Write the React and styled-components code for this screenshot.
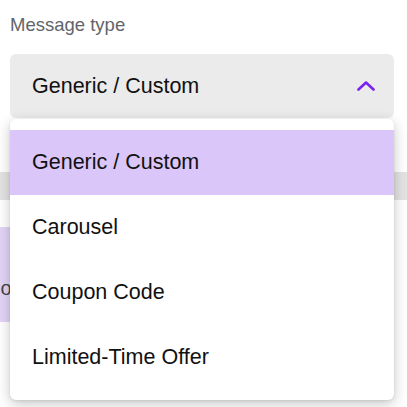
import React, { useState } from "react";
import styled, { createGlobalStyle } from "styled-components";

const GlobalStyle = createGlobalStyle`
  body {
    margin: 0;
    background: #ffffff;
    font-family: "Liberation Sans", Arial, sans-serif;
    overflow: hidden;
  }
`;

const Page = styled.div`
  width: 407px;
  height: 407px;
  position: relative;
  padding-top: 13px;
  box-sizing: border-box;
`;

const Label = styled.div`
  margin-left: 10px;
  font-size: 18.5px;
  line-height: 24px;
  color: #62646b;
`;

const Field = styled.div`
  position: relative;
  margin: 17px 0 0 10px;
  width: 384px;
`;

const Trigger = styled.button`
  display: flex;
  align-items: center;
  justify-content: space-between;
  width: 100%;
  height: 64px;
  padding: 0 19px 0 22px;
  border: 0;
  border-radius: 6px;
  background: #ebebeb;
  font-family: inherit;
  font-size: 21.5px;
  color: #111111;
  cursor: pointer;
  box-sizing: border-box;
`;

const Menu = styled.ul`
  position: absolute;
  top: 65px;
  left: 0;
  right: 0;
  margin: 0;
  padding: 11px 0 10px;
  list-style: none;
  background: #ffffff;
  border-radius: 6px;
  box-shadow: 0 4px 14px rgba(0, 0, 0, 0.22), 0 1px 3px rgba(0, 0, 0, 0.08);
  z-index: 2;
`;

const Option = styled.li`
  display: flex;
  align-items: center;
  height: 65px;
  padding-left: 22px;
  font-size: 21.5px;
  color: #111111;
  background: ${(p) => (p.$active ? "#dbc6fa" : "transparent")};
  cursor: pointer;
`;

const Band = styled.div`
  height: 28px;
  margin-top: 54px;
  background: #e3e3e3;
`;

const Bubble = styled.div`
  margin: 27px 0 0 -30px;
  width: 260px;
  height: 95px;
  padding-left: 16px;
  display: flex;
  align-items: flex-end;
  padding-bottom: 22px;
  box-sizing: border-box;
  background: #e2d4f6;
  border-radius: 8px;
  font-size: 20px;
  color: #444;
`;

const Chevron = () => (
  <svg width="18" height="10" viewBox="0 0 18 10" fill="none">
    <path d="M1.5 8.5 L9 1.5 L16.5 8.5" stroke="#7b22f2" strokeWidth="2.6" strokeLinecap="round" strokeLinejoin="round" />
  </svg>
);

const options = ["Generic / Custom", "Carousel", "Coupon Code", "Limited-Time Offer"];

export default function App() {
  const [value, setValue] = useState(options[0]);

  return (
    <Page>
      <GlobalStyle />
      <Label>Message type</Label>
      <Field>
        <Trigger>
          <span>{value}</span>
          <Chevron />
        </Trigger>
        <Menu>
          {options.map((o) => (
            <Option key={o} $active={o === value} onClick={() => setValue(o)}>
              {o}
            </Option>
          ))}
        </Menu>
      </Field>
      <Band />
      <Bubble>Coupon</Bubble>
    </Page>
  );
}
